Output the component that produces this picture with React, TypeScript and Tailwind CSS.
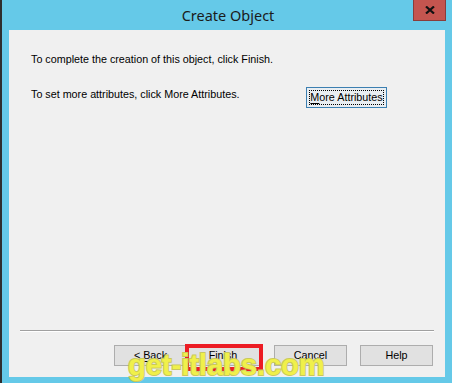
const BODY_FONT = "font-['Liberation_Sans',Arial,sans-serif]";

function DlgButton({ children, className = "" }: { children: React.ReactNode; className?: string }) {
  return (
    <div
      className={`flex h-[21px] w-[73px] items-center justify-center whitespace-nowrap border border-[#adadad] bg-[#e1e1e1] leading-none text-black ${className}`}
    >
      {children}
    </div>
  );
}

export default function App() {
  return (
    <div className="relative h-[383px] w-[452px] overflow-hidden border-l-2 border-[#2e2e2e] bg-[#65c9e8]">
      {/* title bar */}
      <div className="relative flex h-[30px] items-center justify-center">
        <span className="pl-[2px] font-['Noto_Sans',sans-serif] text-[14.5px] leading-none text-[#1b1b1b]">
          Create Object
        </span>
        <div className="absolute right-[6px] top-0 flex h-[21px] w-[33px] items-center justify-center border border-t-0 border-[#8a3c3a] bg-[#c4554f]">
          <svg width="10" height="8" viewBox="0 0 10 8">
            <path d="M1 0.5 L9 7.5 M9 0.5 L1 7.5" stroke="#111" strokeWidth="2.2" />
          </svg>
        </div>
      </div>

      {/* dialog body */}
      <div
        className={`ml-[7px] mr-[7px] flex h-[347px] flex-col bg-[#f0f0f0] ${BODY_FONT} text-[10.75px] text-black`}
      >
        <p className="mt-[23px] whitespace-nowrap pl-[22px] leading-[13px]">
          To complete the creation of this object, click Finish.
        </p>

        <div className="mt-[21px] flex items-start pl-[22px] pr-[58px]">
          <p className="mt-[1px] whitespace-nowrap leading-[13px]">
            To set more attributes, click More Attributes.
          </p>
          <div className="ml-auto flex h-[21px] w-[81px] items-center justify-center border border-[#3c7fb1] bg-[#e9eef2] p-[2px]">
            <div className="flex h-full w-full items-center justify-center whitespace-nowrap border border-dotted border-black leading-none">
              <span>
                <span className="underline underline-offset-2">M</span>ore Attributes
              </span>
            </div>
          </div>
        </div>

        <div className="flex-1" />

        <div className="mx-[11px] h-[2px] border-t border-[#a0a0a0] bg-white" />

        <div className="relative mb-[11px] mt-[13px] flex justify-end pr-[12px]">
          <DlgButton>
            &lt;&nbsp;<span className="underline underline-offset-2">B</span>ack
          </DlgButton>
          <DlgButton className="border-l-0">Finish</DlgButton>
          <DlgButton className="ml-[14px]">Cancel</DlgButton>
          <DlgButton className="ml-[13px]">Help</DlgButton>
          {/* red highlight around Finish */}
          <div className="absolute left-[176px] top-[-1px] h-[27px] w-[78px] border-4 border-[#ec1c24]" />
        </div>
      </div>

      {/* watermark */}
      <div className="pointer-events-none absolute left-[126px] top-[347px] whitespace-nowrap font-['Liberation_Sans',Arial,sans-serif] text-[29px] font-bold leading-[36px] text-[#f0f04a] [-webkit-text-stroke:2px_#c9c85c] [paint-order:stroke_fill]">
        get-itlabs.com
      </div>
    </div>
  );
}
